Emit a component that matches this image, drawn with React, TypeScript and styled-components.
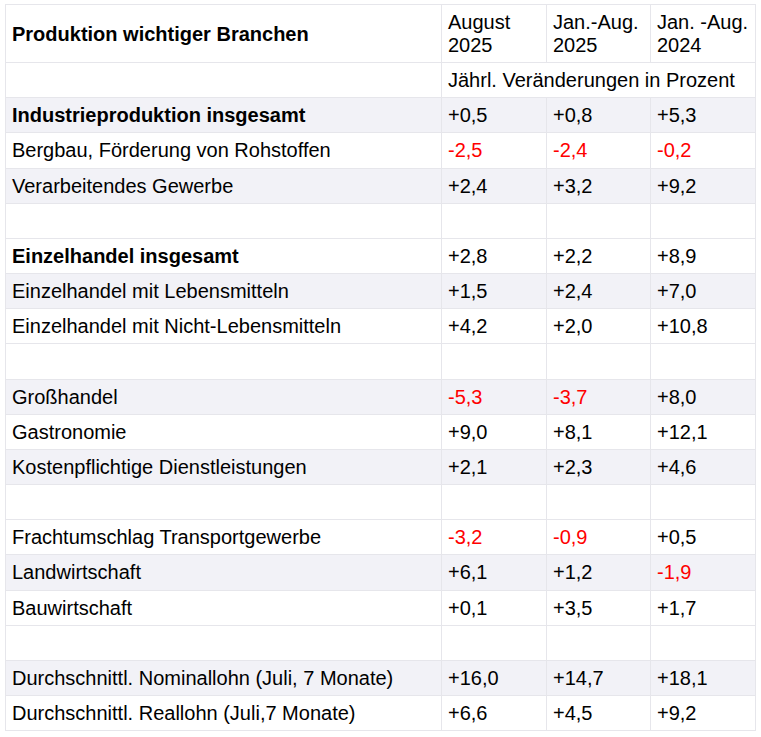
import React from "react";
import styled, { createGlobalStyle } from "styled-components";

const GlobalStyle = createGlobalStyle`
  html, body { margin: 0; padding: 0; background: #ffffff; }
  body { font-family: "Liberation Sans", Arial, sans-serif; }
`;

const Page = styled.div`
  padding: 4px 0 0 5px;
`;

const Table = styled.table`
  border-collapse: collapse;
  table-layout: fixed;
  width: 750px;
  font-family: "Liberation Sans", Arial, sans-serif;
  font-size: 20px;
  line-height: 23px;
  color: #000000;
`;

const Row = styled.tr<{ $shaded?: boolean }>`
  background: ${(p) => (p.$shaded ? "#f2f2f7" : "#ffffff")};
`;

const Cell = styled.td<{ $bold?: boolean; $neg?: boolean }>`
  border: 1px solid #e6e6eb;
  padding: 6px 6px 5.17px;
  height: 23px;
  vertical-align: middle;
  white-space: nowrap;
  overflow: visible;
  font-weight: ${(p) => (p.$bold ? 700 : 400)};
  color: ${(p) => (p.$neg ? "#ff0000" : "#000000")};
`;

const HeadCell = styled(Cell)`
  white-space: normal;
`;

type DataRow = {
  label?: string;
  values?: string[];
  bold?: boolean;
  shaded?: boolean;
};

const rows: DataRow[] = [
  { label: "Industrieproduktion insgesamt", values: ["+0,5", "+0,8", "+5,3"], bold: true, shaded: true },
  { label: "Bergbau, Förderung von Rohstoffen", values: ["-2,5", "-2,4", "-0,2"] },
  { label: "Verarbeitendes Gewerbe", values: ["+2,4", "+3,2", "+9,2"], shaded: true },
  {},
  { label: "Einzelhandel insgesamt", values: ["+2,8", "+2,2", "+8,9"], bold: true },
  { label: "Einzelhandel mit Lebensmitteln", values: ["+1,5", "+2,4", "+7,0"], shaded: true },
  { label: "Einzelhandel mit Nicht-Lebensmitteln", values: ["+4,2", "+2,0", "+10,8"] },
  {},
  { label: "Großhandel", values: ["-5,3", "-3,7", "+8,0"], shaded: true },
  { label: "Gastronomie", values: ["+9,0", "+8,1", "+12,1"] },
  { label: "Kostenpflichtige Dienstleistungen", values: ["+2,1", "+2,3", "+4,6"], shaded: true },
  {},
  { label: "Frachtumschlag Transportgewerbe", values: ["-3,2", "-0,9", "+0,5"] },
  { label: "Landwirtschaft", values: ["+6,1", "+1,2", "-1,9"], shaded: true },
  { label: "Bauwirtschaft", values: ["+0,1", "+3,5", "+1,7"] },
  {},
  { label: "Durchschnittl. Nominallohn (Juli, 7 Monate)", values: ["+16,0", "+14,7", "+18,1"], shaded: true },
  { label: "Durchschnittl. Reallohn (Juli,7 Monate)", values: ["+6,6", "+4,5", "+9,2"] },
];

export default function App() {
  return (
    <>
      <GlobalStyle />
      <Page>
        <Table>
          <colgroup>
            <col style={{ width: 436 }} />
            <col style={{ width: 105 }} />
            <col style={{ width: 104 }} />
            <col style={{ width: 105 }} />
          </colgroup>
          <tbody>
            <Row>
              <HeadCell $bold>Produktion wichtiger Branchen</HeadCell>
              <HeadCell>August<br />2025</HeadCell>
              <HeadCell>Jan.-Aug.<br />2025</HeadCell>
              <HeadCell>Jan. -Aug.<br />2024</HeadCell>
            </Row>
            <Row>
              <Cell />
              <Cell colSpan={3}>Jährl. Veränderungen in Prozent</Cell>
            </Row>
            {rows.map((r, i) => (
              <Row key={i} $shaded={r.shaded}>
                <Cell $bold={r.bold}>{r.label ?? ""}</Cell>
                {(r.values ?? ["", "", ""]).map((v, j) => (
                  <Cell key={j} $neg={v.startsWith("-")}>{v}</Cell>
                ))}
              </Row>
            ))}
          </tbody>
        </Table>
      </Page>
    </>
  );
}
